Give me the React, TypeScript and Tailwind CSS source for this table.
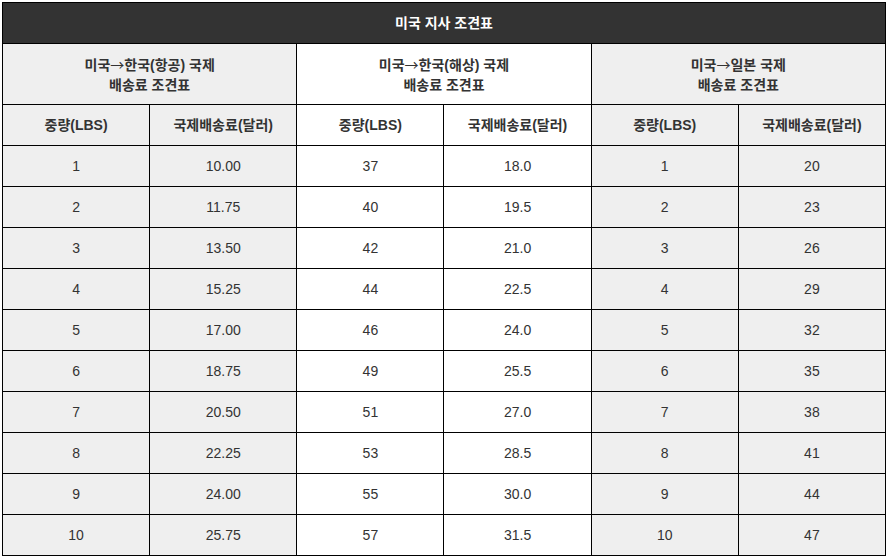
import React from "react";

const sections = [
  { from: "미국", to: "한국(항공) 국제", bg: "bg-[#efefef]" },
  { from: "미국", to: "한국(해상) 국제", bg: "bg-white" },
  { from: "미국", to: "일본 국제", bg: "bg-[#efefef]" },
];

const rows: [string, string, string, string, string, string][] = [
  ["1", "10.00", "37", "18.0", "1", "20"],
  ["2", "11.75", "40", "19.5", "2", "23"],
  ["3", "13.50", "42", "21.0", "3", "26"],
  ["4", "15.25", "44", "22.5", "4", "29"],
  ["5", "17.00", "46", "24.0", "5", "32"],
  ["6", "18.75", "49", "25.5", "6", "35"],
  ["7", "20.50", "51", "27.0", "7", "38"],
  ["8", "22.25", "53", "28.5", "8", "41"],
  ["9", "24.00", "55", "30.0", "9", "44"],
  ["10", "25.75", "57", "31.5", "10", "47"],
];

const cellBg = ["bg-[#efefef]", "bg-[#efefef]", "bg-white", "bg-white", "bg-[#efefef]", "bg-[#efefef]"];

export default function App() {
  return (
    <div className="p-[2px] bg-white min-h-screen font-['Liberation_Sans','Noto_Sans_CJK_KR',sans-serif] text-[14px] text-[#333]">
      <table className="w-[884px] table-fixed border-collapse text-center">
        <thead>
          <tr>
            <th colSpan={6} className="h-[41px] border border-black bg-[#333] text-white font-bold">
              미국 지사 조견표
            </th>
          </tr>
          <tr>
            {sections.map((s) => (
              <th key={s.to} colSpan={2} className={`h-[61px] border border-black font-bold leading-[20px] ${s.bg}`}>
                {s.from}
                <span className="font-['Noto_Sans_CJK_KR',sans-serif] font-normal">→</span>
                {s.to}
                <br />
                배송료 조견표
              </th>
            ))}
          </tr>
          <tr>
            {cellBg.map((bg, i) => (
              <th key={i} className={`h-[41px] border border-black font-bold ${bg}`}>
                {i % 2 === 0 ? "중량(LBS)" : "국제배송료(달러)"}
              </th>
            ))}
          </tr>
        </thead>
        <tbody>
          {rows.map((r) => (
            <tr key={r[0]}>
              {r.map((v, i) => (
                <td key={i} className={`h-[41px] border border-black ${cellBg[i]}`}>
                  {v}
                </td>
              ))}
            </tr>
          ))}
        </tbody>
      </table>
    </div>
  );
}
